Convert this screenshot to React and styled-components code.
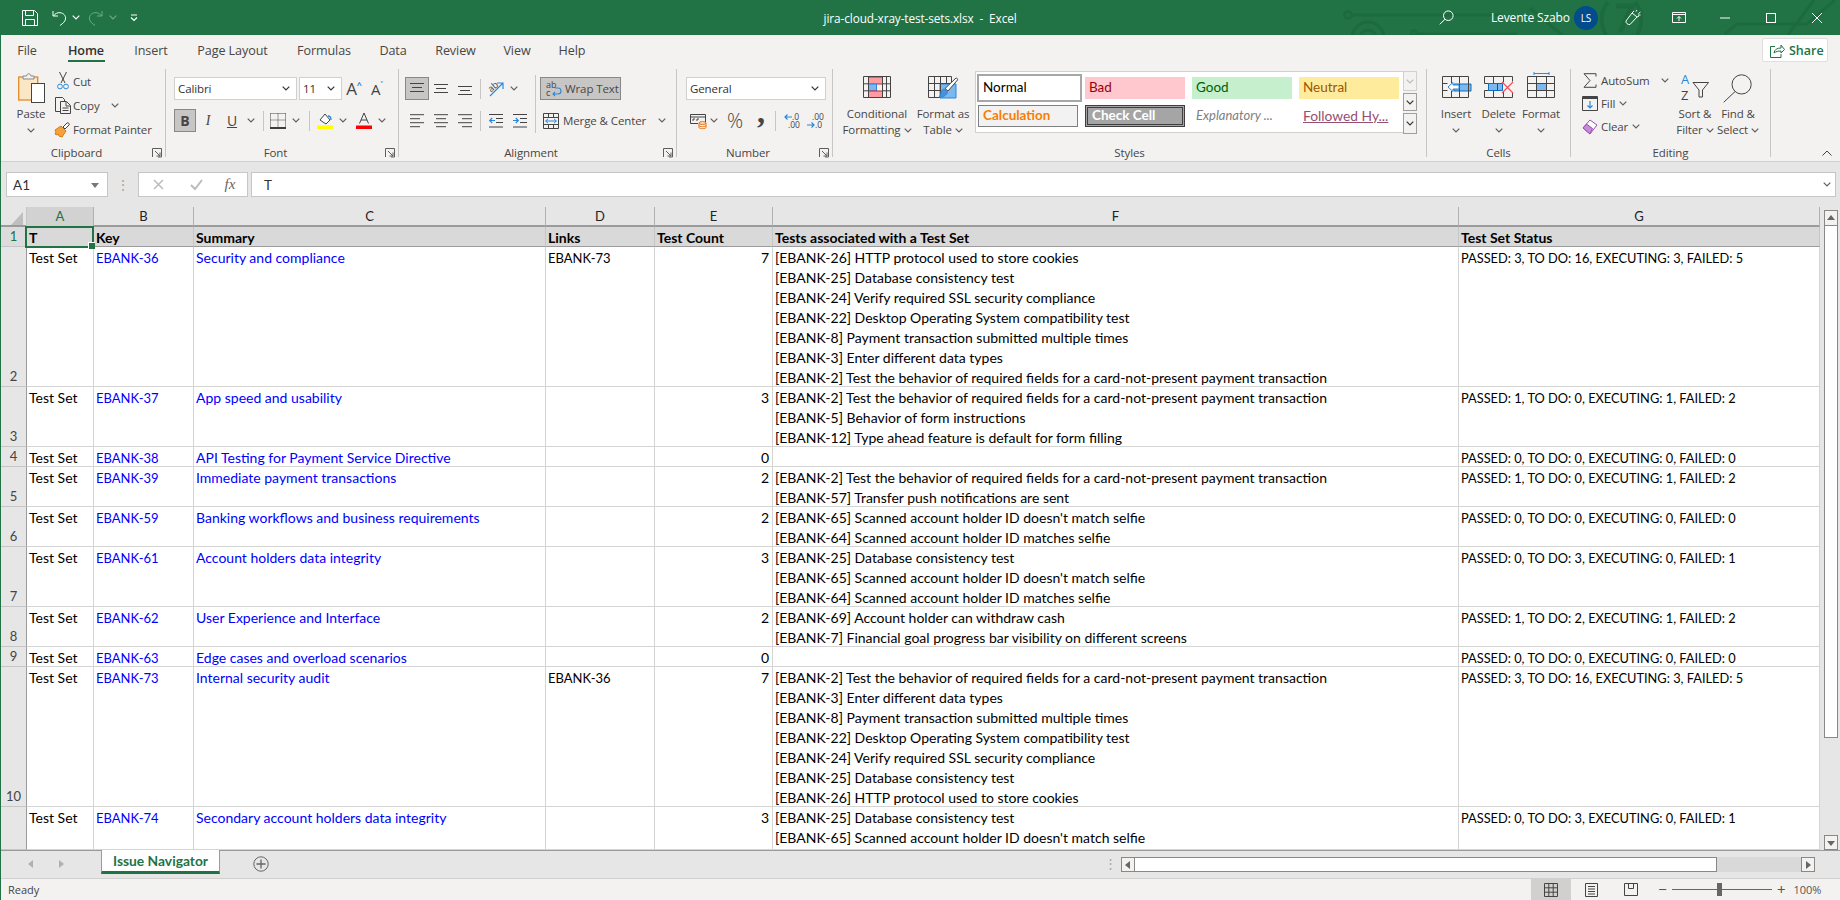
import React from "react";
import styled, { createGlobalStyle } from "styled-components";

const UI = `"Open Sans", "Noto Sans", sans-serif`;
const CELL = `Lato, "Noto Sans", sans-serif`;
const GREEN = "#217346";
const BLUE = "#2b88d8";
const DARK = "#444";

const GlobalStyle = createGlobalStyle`
  html, body { margin: 0; padding: 0; height: 100%; overflow: hidden; background: #f3f2f1; }
  * { box-sizing: border-box; }
`;

const Svg = ({ w, h, children, stroke = DARK }) => (
  <svg width={w} height={h} viewBox={`0 0 ${w} ${h}`} fill="none" stroke={stroke} strokeWidth="1" style={{ display: "block", flex: "none", overflow: "visible" }}>
    {children}
  </svg>
);

const Chevron = ({ color = "#605e5c" }) => (
  <Svg w={8} h={5} stroke={color}>
    <path d="M.7.7 4 4l3.3-3.3" strokeWidth="1.2" />
  </Svg>
);

const Launcher = () => (
  <Svg w={10} h={10} stroke="#605e5c">
    <path d="M.5 9V.5H9.5V9H6M3 3l5 5M8 4.500V8H4.500" />
  </Svg>
);

/* ---- title bar icons ---- */
const SaveIcon = () => (
  <Svg w={16} h={16} stroke="#fff">
    <path d="M.5.5h12l3 3v12H.5zM3.500.5v5h8v-5M3.500 15.500v-6h9v6" />
  </Svg>
);
const UndoIcon = ({ color = "#fff" }) => (
  <Svg w={15} h={16} stroke={color}>
    <path d="M1 1v5h5M1.500 6C3 3.500 5.500 2.500 8 2.700c3.500.300 6 3 5.500 6.300-.4 2.500-2.500 4.300-5.500 6.500" />
  </Svg>
);
const RedoIcon = ({ color }) => (
  <Svg w={15} h={16} stroke={color}>
    <path d="M14 1v5H9M13.500 6C12 3.500 9.500 2.500 7 2.700 3.500 3 1 5.700 1.500 9c.4 2.500 2.500 4.300 5.500 6.500" />
  </Svg>
);
const CustomizeIcon = () => (
  <Svg w={8} h={8} stroke="#fff">
    <path d="M1 1h6M1 3.500l3 3 3-3" strokeWidth="1.200" />
  </Svg>
);
const SearchIcon = ({ color = "#fff", size = 15 }) => (
  <Svg w={size} h={size} stroke={color}>
    <circle cx={size * 0.62} cy={size * 0.38} r={size * 0.32} />
    <path d={`M${size * 0.4} ${size * 0.62}L.7 ${size - 0.7}`} />
  </Svg>
);
const PenIcon = () => (
  <Svg w={17} h={17} stroke="#fff">
    <path d="M1 12l6-8 5 4-7 7.500c-2 .5-4.500-1.500-4-3.500zM7 4l2-2M12 8l2-1M11 2.500l1-1.500M13.500 4.500L15.500 3M13 6h2.500" />
  </Svg>
);
const DisplayIcon = () => (
  <Svg w={14} h={11} stroke="#fff">
    <path d="M.5.5h13v10H.5zM.5 2.500h13M7 9V4.500M5 6.500l2-2 2 2" />
  </Svg>
);
const MinIcon = () => <Svg w={10} h={10} stroke="#fff"><path d="M0 5h10" /></Svg>;
const MaxIcon = () => <Svg w={10} h={10} stroke="#fff"><rect x=".5" y=".5" width="9" height="9" /></Svg>;
const CloseIcon = () => <Svg w={10} h={10} stroke="#fff"><path d="M0 0l10 10M10 0L0 10" /></Svg>;

const CircuitArt = () => (
  <svg width="520" height="35" viewBox="0 0 520 35" fill="none" stroke="#1d6a3f" strokeWidth="3">
    <circle cx="28" cy="15" r="3.500" />
    <path d="M32 15h150" />
    <circle cx="48" cy="38" r="16" />
    <circle cx="48" cy="38" r="8" />
    <circle cx="94" cy="33" r="2.500" />
    <path d="M97 34h100M210 8l32 27" />
    <path d="M288 2c-8 9-8 22-2 33M315 2c8 9 8 22 2 33" strokeWidth="4" />
    <path d="M296 6h16l-12 26" strokeWidth="5" />
    <path d="M405 34l12-10h70l28-24M468 35l26-35" />
  </svg>
);

/* ---- ribbon icons ---- */
const PasteIcon = () => (
  <Svg w={27} h={31}>
    <rect x=".7" y="5" width="19" height="23" fill="#fbe6c6" stroke="#e38b24" strokeWidth="1.300" />
    <path d="M5 7V4h3.500c.5-3 4-3 4.500 0h3v3z" fill="#f3f2f1" stroke="#8a8886" />
    <rect x="13.500" y="11.500" width="13" height="19" fill="#fff" stroke={DARK} />
  </Svg>
);
const CutIcon = () => (
  <Svg w={12} h={18}>
    <path d="M2.500 0L8 11M9.500 0L4 11" />
    <circle cx="3" cy="14.500" r="2.400" stroke={BLUE} />
    <circle cx="9" cy="14.500" r="2.400" stroke={BLUE} />
  </Svg>
);
const CopyIcon = () => (
  <Svg w={16} h={17}>
    <path d="M5 14.500H.5V.5h7l2 2V5" />
    <path d="M5.500 4.500h6l4 4v8h-10zM11 5v4h4M7.500 11h6M7.500 13.500h6" />
  </Svg>
);
const PainterIcon = () => (
  <Svg w={17} h={17}>
    <path d="M1 9l6-4 5 5-4 6-3-1-1-2-1 1-2-1 1-2z" fill="#f6a23c" stroke="#e0760d" />
    <path d="M9 6l4-4c1-1 3 1 2 2l-4 4z" fill="#fff" stroke={DARK} />
  </Svg>
);
const AlignV = ({ at }) => (
  <Svg w={14} h={14}>
    <path d={`M0 ${at + 0.5}h14M2 ${at + 4.5}h10M0 ${at + 8.5}h14`} />
  </Svg>
);
const AlignH = ({ mode }) => {
  const short = mode === "left" ? "M0 4.500h10M0 12.500h10" : mode === "right" ? "M4 4.500h10M4 12.500h10" : "M2 4.500h10M2 12.500h10";
  return (
    <Svg w={14} h={14}>
      <path d={`M0 .5h14M0 8.500h14${short}`} transform="translate(0 .2)" />
    </Svg>
  );
};
const IndentIcon = ({ dir }) => (
  <Svg w={14} h={14}>
    <path d="M0 .5h14M7 4.500h7M7 8.500h7M0 13h14" />
    {dir === "out" ? (
      <path d="M6 6.500H.8M3.200 4L.7 6.500 3.200 9" stroke={BLUE} strokeWidth="1.200" />
    ) : (
      <path d="M0 6.500h5.200M2.800 4l2.500 2.500L2.800 9" stroke={BLUE} strokeWidth="1.200" />
    )}
  </Svg>
);
const OrientIcon = () => (
  <Svg w={17} h={16}>
    <text x="0" y="9" fontSize="9" fontFamily={UI} fill={DARK} stroke="none" transform="rotate(-40 5 6)">ab</text>
    <path d="M2 15L15 2M9 2h6v6" stroke={BLUE} strokeWidth="1.200" />
  </Svg>
);
const WrapIcon = () => (
  <Svg w={16} h={15}>
    <text x="0" y="7" fontSize="9" fontFamily={UI} fill={DARK} stroke="none">ab</text>
    <text x="0" y="15" fontSize="9" fontFamily={UI} fill={DARK} stroke="none">c</text>
    <path d="M7 13h5c4 0 4-6 0-6H9M9 11l-2 2 2 2" stroke={BLUE} strokeWidth="1.100" />
  </Svg>
);
const MergeIcon = () => (
  <Svg w={16} h={16}>
    <path d="M.5.5h15v15H.5zM.5 4.500h15M.5 11.500h15M5.500.5v4M10.500.5v4M5.500 11.500v4M10.500 11.500v4" />
    <path d="M2.500 8h11M5 5.800L2.700 8 5 10.200M11 5.800L13.300 8 11 10.200" stroke={BLUE} />
  </Svg>
);
const BorderIcon = () => (
  <Svg w={16} h={16}>
    <path d="M.5.5h15M.5.5v13M15.500.5v13M8 .5v13M.5 7h15" strokeDasharray="1 1" />
    <path d="M0 15h16" stroke="#000" strokeWidth="1.500" />
  </Svg>
);
const FillIcon = () => (
  <Svg w={16} h={17}>
    <path d="M3 8l5-6 5 6-4 4z" fill="#fff" />
    <path d="M11 4c2 0 3 2 3 4" stroke={BLUE} strokeWidth="1.300" />
    <rect x="0" y="13.500" width="16" height="3.500" fill="#ffff00" stroke="none" />
  </Svg>
);
const FontColorIcon = () => (
  <Svg w={16} h={17}>
    <path d="M3.500 11.500L8 1l4.500 10.500M5 8h6" />
    <rect x="0" y="13.500" width="16" height="3.500" fill="#ff0000" stroke="none" />
  </Svg>
);
const AccountIcon = () => (
  <Svg w={17} h={16}>
    <path d="M.5 1.500h15V10M.5 1.500v9H8M.5 4h15" />
    <path d="M3 8V6h2M7 8V6h2" />
    <ellipse cx="12.500" cy="10" rx="3.500" ry="1.500" fill="#fbd9a8" stroke="#e8791e" />
    <path d="M9 10v4.500c0 1.500 7 1.500 7 0V10M9 12.500c0 1.500 7 1.500 7 0" stroke="#e8791e" />
  </Svg>
);
const DecimalIcon = ({ more }) => (
  <Svg w={16} h={16}>
    {more ? (
      <>
        <text x="5" y="6.500" fontSize="8.500" fontFamily={UI} fill={DARK} stroke="none">.00</text>
        <text x="8" y="15" fontSize="8.500" fontFamily={UI} fill={DARK} stroke="none">.0</text>
        <path d="M0 12h7M4.500 9.500L7 12l-2.500 2.500" stroke={BLUE} strokeWidth="1.200" />
      </>
    ) : (
      <>
        <text x="8" y="6.500" fontSize="8.500" fontFamily={UI} fill={DARK} stroke="none">.0</text>
        <text x="4" y="15" fontSize="8.500" fontFamily={UI} fill={DARK} stroke="none">.00</text>
        <path d="M8 4H1M3.500 1.500L1 4l2.500 2.500" stroke={BLUE} strokeWidth="1.200" />
      </>
    )}
  </Svg>
);
const CondIcon = () => (
  <Svg w={28} h={22}>
    <path d="M5.500 1h14v7h-14z" fill="#ff9ca1" stroke="#d81e2b" />
    <path d="M5.500 8h8v7h-8z" fill="#7ab8ef" stroke={BLUE} />
    <path d="M5.500 15h14v6.500h-14z" fill="#ff9ca1" stroke="#d81e2b" />
    <path d="M.5.5h27v21H.5zM.5 7.800h5M.5 14.800h5M19.500 7.800h8M19.500 14.800h8M5.500.5v21M19.500.5v21M23.500.5v21" />
  </Svg>
);
const TableIcon = () => (
  <Svg w={30} h={24}>
    <path d="M12 8h16v14H12z" fill="#7ab8ef" stroke={BLUE} />
    <path d="M.5.5h23M.5 7.500h23M.5 14.500h12M.5 21.500h12M.5.5v21M6.500.5v21M12.500.5v21M18.500.5v7M23.500.5v7" />
    <path d="M28 2c1 0 2 1 1.500 2L20 15l-3-2.500z" fill="#fff" stroke={DARK} />
    <path d="M16.500 13l3 3c-.5 3-5 6-8.500 5 2-1.500 1.500-3 2-5 .5-2 2-3 3.500-3z" fill="#4a90d9" stroke={BLUE} />
  </Svg>
);
const InsertIcon = () => (
  <Svg w={32} h={22}>
    <path d="M14 8h17v7H14z" fill="#7ab8ef" stroke="#106ebe" />
    <path d="M2.500.5h26v21h-26zM2.500 7.500h5M2.500 14.500h5M11.500.5v7M19.500.5v7M11.500 15v6.500M19.500 15v6.500M19.500 8v7" />
    <path d="M13 6.500L8 11l5 4.500v-2.500h6V9h-6z" fill="#fff" stroke={BLUE} />
  </Svg>
);
const DeleteIcon = () => (
  <Svg w={30} h={22}>
    <path d="M4.500 7.500h14v7h-14z" fill="#7ab8ef" stroke="#106ebe" />
    <path d="M.5.500h28M.5 21.500h28M.5.500v7h4M.5 21.500v-7h4M9.500.500v7M19.500.500v6M9.500 14.500v7M19.500 16v5.500M28.500.500v5M28.500 17v4.500M13.500 7.500v7" />
    <path d="M18 6l11 11M29 6L18 17" stroke="#f0555f" strokeWidth="1.300" />
  </Svg>
);
const FormatIcon = () => (
  <Svg w={28} h={22}>
    <path d="M7 -2.500h15M7 -4v3M22 -4v3" stroke={BLUE} />
    <path d="M9.500 7.500h10v7h-10z" fill="#7ab8ef" stroke="#106ebe" />
    <path d="M.5.5h27v21H.5zM.5 7.500h27M.5 14.500h27M9.500.5v21M19.500.5v21" />
  </Svg>
);
const SumIcon = () => (
  <Svg w={14} h={15}>
    <path d="M13 3.500V.7H1l6 6.800-6 6.800h12v-2.800" />
  </Svg>
);
const FillDownIcon = () => (
  <Svg w={16} h={15}>
    <path d="M.5 14.500V.5h15v14z" />
    <path d="M.5 2h15" strokeWidth="2" />
    <path d="M8 5v7M5.500 9.500L8 12l2.500-2.500" stroke={BLUE} strokeWidth="1.200" />
  </Svg>
);
const ClearIcon = () => (
  <Svg w={16} h={16}>
    <path d="M1 9l7-8 7 5-7 9z" fill="#fff" stroke="#9b4fb5" />
    <path d="M1 9l3.500-4 6 4.500L8 15z" fill="#c58ad8" stroke="#9b4fb5" />
  </Svg>
);
const SortIcon = () => (
  <Svg w={28} h={28}>
    <text x="0" y="11" fontSize="13" fontFamily={UI} fill={BLUE} stroke="none">A</text>
    <text x="0" y="27" fontSize="13" fontFamily={UI} fill={DARK} stroke="none">Z</text>
    <path d="M12 9.500h15.500L21.500 17v7h-3.500v-7z" />
  </Svg>
);
const ShareIcon = () => (
  <Svg w={15} h={15} stroke={GREEN}>
    <path d="M5 3.500H.5v11h10.500V11M4 10c.5-3.500 3-5 7-5V2l3.500 4.500L11 10V8c-3 0-5 .5-7 2z" />
  </Svg>
);
const GridViewIcon = () => (
  <Svg w={14} h={14}>
    <path d="M.5.5h13v13H.5zM.5 4.800h13M.5 9.200h13M4.800.5v13M9.200.5v13" />
  </Svg>
);
const PageViewIcon = () => (
  <Svg w={13} h={14}>
    <path d="M.5.5h12v13H.5zM3 3.500h7M3 6h7M3 8.500h7M3 11h7" />
  </Svg>
);
const BreakViewIcon = () => (
  <Svg w={14} h={13}>
    <path d="M.5 12.500V.5h13v12zM4.500.5v5h5v-5" />
  </Svg>
);
const PlusCircle = () => (
  <Svg w={16} h={16} stroke="#666">
    <circle cx="8" cy="8" r="7.200" />
    <path d="M8 3.500v9M3.500 8h9" strokeWidth="1.300" />
  </Svg>
);
const ArrowTri = ({ dir, color = "#666", size = 7 }) => {
  const d = {
    up: "M0 6L4 1l4 5z",
    down: "M0 2l4 5 4-5z",
    left: "M6 0L1 4l5 4z",
    right: "M2 0l5 4-5 4z",
  }[dir];
  return (
    <svg width={size + 1} height={size + 1} viewBox="0 0 8 8" style={{ display: "block" }}>
      <path d={d} fill={color} />
    </svg>
  );
};

/* ---- window ---- */
const Win = styled.div`
  width: 1840px;
  height: 900px;
  display: flex;
  flex-direction: column;
  border-left: 1px solid ${GREEN};
  font-family: ${UI};
  color: ${DARK};
  overflow: hidden;
`;

const TitleBar = styled.header`
  position: relative;
  flex: none;
  height: 35px;
  margin-left: -1px;
  background: ${GREEN};
  display: flex;
  align-items: center;
  color: #fff;
`;

const TitleArt = styled.div`
  position: absolute;
  right: 0;
  top: 0;
  height: 35px;
  line-height: 0;
`;

const QuickTools = styled.div`
  position: relative;
  display: flex;
  align-items: center;
  width: 827px;
  padding-left: 22px;
`;

const QuickGap = styled.span`
  display: block;
  flex: none;
  width: ${(p) => p.$w}px;
`;

const TitleText = styled.div`
  position: relative;
  width: 618px;
  font-size: 11.800px;
  letter-spacing: -0.1px;
  white-space: pre;
`;

const TitleRight = styled.div`
  position: relative;
  display: flex;
  align-items: center;
  flex: 1;
`;

const UserName = styled.span`
  font-size: 12px;
  letter-spacing: -0.15px;
  margin-left: 37px;
  width: 83px;
  white-space: nowrap;
`;

const Avatar = styled.span`
  display: flex;
  align-items: center;
  justify-content: center;
  width: 24px;
  height: 24px;
  border-radius: 50%;
  background: #004c8c;
  font-size: 10px;
`;

const TitleBtn = styled.span`
  display: flex;
  justify-content: center;
  width: 46px;
`;

const TabRow = styled.nav`
  flex: none;
  height: 27px;
  display: flex;
  align-items: flex-start;
  background: #f3f2f1;
  padding-left: 1px;
`;

const TabItem = styled.div`
  width: ${(p) => p.$w}px;
  height: 27px;
  display: flex;
  justify-content: center;
  font-size: 12.600px;
  line-height: 18px;
  padding-top: 7px;
  color: ${(p) => (p.$active ? "#323130" : "#484644")};
  font-weight: ${(p) => (p.$active ? 600 : 400)};
  position: relative;
  letter-spacing: -0.1px;
  &::after {
    content: "";
    display: ${(p) => (p.$active ? "block" : "none")};
    position: absolute;
    left: 16px;
    right: 15px;
    bottom: 0;
    height: 2px;
    background: ${GREEN};
  }
`;

const ShareBtn = styled.button`
  margin: 3px 12px 0 auto;
  width: 66px;
  height: 24px;
  display: flex;
  align-items: center;
  gap: 4px;
  padding: 0 0 0 7px;
  background: #fff;
  border: 1px solid #e1dfdd;
  border-radius: 2px;
  color: ${GREEN};
  font-family: ${UI};
  font-size: 12.500px;
  font-weight: 600;
`;

const Ribbon = styled.section`
  flex: none;
  height: 100px;
  display: flex;
  background: #f3f2f1;
  border-bottom: 1px solid #d2d0ce;
  padding-top: 7px;
  position: relative;
  font-size: 11.500px;
  letter-spacing: -0.1px;
  color: #484644;
`;

const Group = styled.div`
  flex: none;
  width: ${(p) => p.$w}px;
  height: 88px;
  display: flex;
  flex-direction: column;
  border-right: 1px solid #c8c6c4;
`;

const GroupBody = styled.div`
  flex: 1;
  display: flex;
  padding-left: ${(p) => p.$pad || 0}px;
  min-height: 0;
`;

const GroupFoot = styled.div`
  flex: none;
  height: 14px;
  margin-bottom: -3px;
  display: flex;
  align-items: center;
  padding-right: ${(p) => (p.$plain ? 0 : 3)}px;
  line-height: 14px;
`;

const FootLabel = styled.span`
  flex: 1;
  text-align: center;
`;

const Collapse = styled.span`
  position: absolute;
  right: 8px;
  bottom: 5px;
`;

const SideColumn = styled.div`
  flex: none;
  width: ${(p) => (p.$w ? `${p.$w}px` : "auto")};
  display: flex;
  flex-direction: column;
`;

const BigBtn = styled.div`
  flex: none;
  width: ${(p) => p.$w}px;
  display: flex;
  flex-direction: column;
  align-items: center;
  padding-top: ${(p) => p.$top ?? 7}px;
  line-height: 16px;
  white-space: nowrap;
`;

const BigIconSlot = styled.span`
  display: flex;
  align-items: flex-start;
  justify-content: center;
  height: ${(p) => p.$h || 24}px;
  margin-bottom: ${(p) => p.$mb ?? 7}px;
`;

const BtnLine = styled.span`
  display: flex;
  align-items: center;
  justify-content: center;
  gap: 3px;
  height: ${(p) => p.$h || 16}px;
`;

const SmallRow = styled.div`
  display: flex;
  align-items: center;
  height: ${(p) => p.$h || 24}px;
  gap: ${(p) => p.$gap ?? 3}px;
  white-space: nowrap;
`;

const SmallSlot = styled.span`
  display: flex;
  justify-content: center;
  flex: none;
  width: ${(p) => p.$w}px;
`;

const ToolRow = styled.div`
  display: flex;
  align-items: center;
  height: 23px;
  margin-top: ${(p) => p.$mt || 0}px;
`;

const ToolBtn = styled.span`
  flex: none;
  display: flex;
  align-items: center;
  justify-content: center;
  width: ${(p) => p.$w || 24}px;
  height: 23px;
  font-family: ${(p) => (p.$serif ? `"Liberation Serif", serif` : "inherit")};
  font-size: 14px;
  font-style: ${(p) => (p.$italic ? "italic" : "normal")};
  font-weight: ${(p) => (p.$bold ? 700 : 400)};
  text-decoration: ${(p) => (p.$under ? "underline" : "none")};
  background: ${(p) => (p.$active ? "#c8c6c4" : "transparent")};
  border: ${(p) => (p.$active ? "1px solid #8a8886" : "none")};
`;

const PercentBtn = styled(ToolBtn)`
  font-size: 20px;
  font-weight: 300;
`;

const CommaBtn = styled(ToolBtn)`
  font-family: "Liberation Serif", serif;
  font-weight: 700;
  font-size: 32px;
  line-height: 23px;
  padding-bottom: 16px;
  overflow: visible;
`;

const ThinSep = styled.span`
  flex: none;
  display: block;
  width: 1px;
  height: 20px;
  background: #c8c6c4;
  margin: 0 ${(p) => p.$m ?? 4.5}px;
`;

const TallSep = styled.span`
  flex: none;
  display: block;
  width: 1px;
  height: 58px;
  margin: 6px 4px 0 3px;
  background: #c8c6c4;
`;

const ComboBox = styled.div`
  flex: none;
  width: ${(p) => p.$w}px;
  height: 23px;
  margin-right: ${(p) => p.$mr || 0}px;
  display: flex;
  align-items: center;
  justify-content: space-between;
  padding: 0 6px 0 3px;
  background: #fff;
  border: 1px solid #d2d0ce;
  font-size: 11.500px;
  color: #323130;
`;

const GrowFont = styled.span`
  display: flex;
  align-items: flex-start;
  justify-content: center;
  flex: none;
  width: ${(p) => p.$w}px;
  font-size: ${(p) => p.$size}px;
  line-height: 18px;
  color: #444;
  & sup {
    font-size: 9px;
    line-height: 9px;
    color: ${BLUE};
    font-weight: 700;
  }
`;

const WrapBtn = styled.div`
  width: 81px;
  height: 23px;
  display: flex;
  align-items: center;
  gap: 3px;
  padding-left: 5px;
  background: #c8c6c4;
  border: 1px solid #8a8886;
  white-space: nowrap;
`;

const MergeBtn = styled.div`
  display: flex;
  align-items: center;
  height: 23px;
  margin: 9px 0 0 3px;
  gap: 4px;
  white-space: nowrap;
`;

const BodyStack = styled.div`
  display: flex;
  flex-direction: column;
  padding-top: 8px;
`;

const Gallery = styled.div`
  flex: none;
  width: 428px;
  height: 62px;
  margin: 2px 0 0 3px;
  padding: 2px 0 0 2px;
  background: #fff;
  border: 1px solid #d2d0ce;
  border-right: none;
  display: grid;
  grid-template-columns: repeat(4, 100px);
  grid-template-rows: 28px 22px;
  column-gap: 7px;
  row-gap: 3px;
`;

const styleChip = {
  normal: "background:#fff;color:#000;border:2px solid #a6a6a6;margin:0 0 0 -1px;width:105px;",
  bad: "background:#ffc7ce;color:#9c0006;margin:3px 0 0;height:22px;",
  good: "background:#c6efce;color:#006100;margin:3px 0 0;height:22px;",
  neutral: "background:#ffeb9c;color:#9c5700;margin:3px 0 0;height:22px;",
  calc: "background:#f2f2f2;color:#fa7d00;border:1px solid #7f7f7f;font-weight:700;",
  check: "background:#a5a5a5;color:#fff;border:3px double #3f3f3f;font-weight:700;",
  expl: "color:#7f7f7f;font-style:italic;font-size:13px;",
  link: "color:#954f72;text-decoration:underline;font-size:13.800px;",
};

const StyleChip = styled.div`
  display: flex;
  align-items: center;
  padding: 0 0 2px 4px;
  font-family: ${CELL};
  font-size: 13.500px;
  letter-spacing: 0;
  white-space: nowrap;
  overflow: hidden;
  ${(p) => styleChip[p.$kind]}
`;

const GalleryScroll = styled.div`
  flex: none;
  width: 14px;
  margin-top: 2px;
  display: flex;
  flex-direction: column;
  gap: 2px;
`;

const GalleryBtn = styled.span`
  display: flex;
  align-items: center;
  justify-content: center;
  height: ${(p) => p.$h}px;
  background: #f3f2f1;
  border: 1px solid ${(p) => (p.$off ? "#d2d0ce" : "#a19f9d")};
`;

/* ---- formula bar ---- */
const FormulaBar = styled.div`
  flex: none;
  height: 45px;
  display: flex;
  padding: 10px 4px 10px 5px;
  background: #e6e6e6;
`;

const NameBox = styled.div`
  flex: none;
  width: 102px;
  height: 25px;
  display: flex;
  align-items: center;
  justify-content: space-between;
  padding: 0 8px 0 6px;
  background: #fff;
  border: 1px solid #c6c6c6;
  font-family: ${CELL};
  font-size: 13.500px;
  color: #333;
`;

const DotsSlot = styled.span`
  flex: none;
  width: 30px;
  display: flex;
  align-items: center;
  justify-content: center;
  color: #a6a6a6;
  font-size: 14px;
`;

const FxBox = styled.div`
  flex: none;
  width: 110px;
  height: 25px;
  display: flex;
  align-items: center;
  background: #fff;
  border: 1px solid #c6c6c6;
  margin-right: 3px;
`;

const FxSlot = styled.span`
  display: flex;
  justify-content: center;
  width: ${(p) => p.$w}px;
  font-family: "Liberation Serif", serif;
  font-style: italic;
  font-size: 15px;
  color: #666;
`;

const FormulaInput = styled.div`
  flex: 1;
  height: 25px;
  display: flex;
  align-items: center;
  justify-content: space-between;
  padding: 0 4px 0 12px;
  background: #fff;
  border: 1px solid #c6c6c6;
  font-family: ${CELL};
  font-size: 13.500px;
  color: #333;
`;

/* ---- sheet ---- */
const SheetArea = styled.div`
  flex: none;
  height: 643px;
  display: flex;
  background: #fff;
`;

const Sheet = styled.div`
  flex: none;
  width: 1819px;
  overflow: hidden;
  font-family: ${CELL};
  font-size: 14px;
  color: #000;
`;

const COLUMNS = "26px 67px 100px 352px 109px 118px 686px 361px";

const Row = styled.div`
  display: grid;
  grid-template-columns: ${COLUMNS};
  grid-template-rows: ${(p) => p.$height}px;
  height: ${(p) => p.$height}px;
`;

const ColHeadRow = styled.div`
  display: grid;
  grid-template-columns: ${COLUMNS};
  height: 20px;
  background: #e6e6e6;
  border-bottom: 2px solid #9b9b9b;
  font-size: 13px;
`;

const Corner = styled.div`
  position: relative;
  border-right: 1px solid #c6c6c6;
  &::after {
    content: "";
    position: absolute;
    right: 3px;
    bottom: 1px;
    width: 12px;
    height: 13px;
    background: #bfbfbf;
    clip-path: polygon(100% 0, 100% 100%, 0 100%);
  }
`;

const ColHead = styled.div`
  text-align: center;
  line-height: 19px;
  background: ${(p) => (p.$active ? "#d2d2d2" : "transparent")};
  color: ${(p) => (p.$active ? GREEN : "#222")};
  border-right: 1px solid #b1b1b1;
`;

const RowHead = styled.div`
  display: flex;
  align-items: flex-end;
  justify-content: center;
  padding-bottom: 1px;
  line-height: 18px;
  font-size: 13px;
  overflow: hidden;
  background: ${(p) => (p.$active ? "#dcdcdc" : "#e6e6e6")};
  color: ${(p) => (p.$active ? GREEN : "#444")};
  border-right: 1px solid #9b9b9b;
  border-bottom: 1px solid #c6c6c6;
`;

const Cell = styled.div`
  position: relative;
  z-index: ${(p) => (p.$selected ? 2 : 0)};
  padding: 1px 3px 0 2px;
  line-height: 20px;
  font-size: ${(p) => (p.$size ? `${p.$size}px` : "inherit")};
  text-align: ${(p) => (p.$right ? "right" : "left")};
  white-space: nowrap;
  overflow: ${(p) => (p.$header ? "visible" : "hidden")};
  font-weight: ${(p) => (p.$header ? 700 : 400)};
  color: ${(p) => (p.$link ? "#0000ff" : "#000")};
  background: ${(p) => (p.$header ? "#d9d9d9" : "#fff")};
  border-right: 1px solid ${(p) => (p.$header ? "#c6c6c6" : "#d4d4d4")};
  border-bottom: 1px solid ${(p) => (p.$header ? "#9b9b9b" : "#d4d4d4")};
`;

const SelectedMark = styled.span`
  position: absolute;
  left: -2px;
  top: -1px;
  right: -1px;
  bottom: -2px;
  border: 2px solid ${GREEN};
  &::after {
    content: "";
    position: absolute;
    right: -3px;
    bottom: -3px;
    width: 6px;
    height: 6px;
    background: ${GREEN};
    border: 1px solid #fff;
    border-width: 1px 0 0 1px;
  }
`;

const TestLine = styled.div`
  height: 20px;
  line-height: 20px;
`;

const VScroll = styled.div`
  flex: none;
  width: 20px;
  padding: 3px 2px 0 4px;
  background: #e6e6e6;
  display: flex;
  flex-direction: column;
`;

const ScrollBtn = styled.span`
  flex: none;
  display: flex;
  align-items: center;
  justify-content: center;
  width: ${(p) => p.$w || 14}px;
  height: ${(p) => p.$h || 15}px;
  background: #f3f2f1;
  border: 1px solid #8a8886;
`;

const VThumb = styled.span`
  display: block;
  flex: none;
  height: 512px;
  background: #fff;
  border: 1px solid #8a8886;
  border-top: none;
`;

const VTrack = styled.span`
  flex: 1;
  display: block;
`;

/* ---- sheet tabs + status ---- */
const TabStrip = styled.div`
  flex: none;
  height: 28px;
  display: flex;
  align-items: flex-start;
  background: #e6e6e6;
  border-top: 1px solid #9b9b9b;
`;

const TabNav = styled.span`
  flex: none;
  width: 100px;
  height: 26px;
  display: flex;
  align-items: center;
  gap: 22px;
  padding-left: 26px;
`;

const SheetTab = styled.div`
  flex: none;
  width: 119px;
  height: 24px;
  margin-top: -1px;
  display: flex;
  align-items: center;
  justify-content: center;
  background: #fff;
  border-left: 1px solid #9b9b9b;
  border-right: 1px solid #9b9b9b;
  border-bottom: 3px solid ${GREEN};
  font-family: ${CELL};
  font-size: 13.800px;
  font-weight: 700;
  color: ${GREEN};
`;

const AddSheet = styled.span`
  flex: none;
  margin: 5px 0 0 33px;
`;

const HDots = styled.span`
  flex: none;
  margin: 4px 0 0 835px;
  width: 14px;
  color: #a6a6a6;
  font-size: 13px;
  line-height: 16px;
`;

const HScroll = styled.div`
  flex: none;
  width: 694px;
  height: 15px;
  margin: 6px 0 0 3px;
  display: flex;
  background: #d9d9d9;
`;

const HThumb = styled.span`
  display: block;
  flex: none;
  width: 582px;
  height: 15px;
  background: #fff;
  border: 1px solid #8a8886;
  border-left: none;
`;

const HTrack = styled.span`
  display: block;
  flex: 1;
`;

const StatusBar = styled.footer`
  flex: none;
  height: 22px;
  display: flex;
  align-items: center;
  background: #f3f2f1;
  border-top: 1px solid #d2d0ce;
  font-size: 11px;
  color: #444;
  padding-left: 7px;
`;

const ViewBtn = styled.span`
  flex: none;
  display: flex;
  align-items: center;
  justify-content: center;
  width: 40px;
  height: 21px;
  margin-left: ${(p) => p.$ml || 0}px;
  background: ${(p) => (p.$active ? "#d2d0ce" : "transparent")};
`;

const ZoomBar = styled.span`
  display: flex;
  align-items: center;
  margin-left: 7px;
  gap: 5px;
  font-size: 15px;
  line-height: 15px;
  color: #555;
`;

const ZoomTrack = styled.span`
  position: relative;
  display: block;
  width: 100px;
  height: 1px;
  background: #666;
  &::after {
    content: "";
    position: absolute;
    left: 45px;
    top: -6px;
    width: 5px;
    height: 13px;
    background: #666;
  }
`;

const ZoomPct = styled.span`
  margin-left: 8px;
  font-size: 11px;
  color: #555;
`;

const tabs = [
  ["File", 50],
  ["Home", 68, true],
  ["Insert", 62],
  ["Page Layout", 101],
  ["Formulas", 82],
  ["Data", 56],
  ["Review", 69],
  ["View", 54],
  ["Help", 56],
];

const columns = ["A", "B", "C", "D", "E", "F", "G"];
const STATUS = (a, b, c, d) => `PASSED: ${a}, TO DO: ${b}, EXECUTING: ${c}, FAILED: ${d}`;

const T = {
  t26: "[EBANK-26] HTTP protocol used to store cookies",
  t25: "[EBANK-25] Database consistency test",
  t24: "[EBANK-24] Verify required SSL security compliance",
  t22: "[EBANK-22] Desktop Operating System compatibility test",
  t8: "[EBANK-8] Payment transaction submitted multiple times",
  t3: "[EBANK-3] Enter different data types",
  t2: "[EBANK-2] Test the behavior of required fields for a card-not-present payment transaction",
  t5: "[EBANK-5] Behavior of form instructions",
  t12: "[EBANK-12] Type ahead feature is default for form filling",
  t57: "[EBANK-57] Transfer push notifications are sent",
  t65: "[EBANK-65] Scanned account holder ID doesn't match selfie",
  t64: "[EBANK-64] Scanned account holder ID matches selfie",
  t69: "[EBANK-69] Account holder can withdraw cash",
  t7: "[EBANK-7] Financial goal progress bar visibility on different screens",
};

// the last row runs past the bottom of the sheet, so only the part in view is listed
const rows = [
  { n: 2, height: 140, key: "EBANK-36", summary: "Security and compliance", links: "EBANK-73", count: 7, tests: [T.t26, T.t25, T.t24, T.t22, T.t8, T.t3, T.t2], status: STATUS(3, 16, 3, 5) },
  { n: 3, height: 60, key: "EBANK-37", summary: "App speed and usability", count: 3, tests: [T.t2, T.t5, T.t12], status: STATUS(1, 0, 1, 2) },
  { n: 4, height: 20, key: "EBANK-38", summary: "API Testing for Payment Service Directive", count: 0, tests: [], status: STATUS(0, 0, 0, 0) },
  { n: 5, height: 40, key: "EBANK-39", summary: "Immediate payment transactions", count: 2, tests: [T.t2, T.t57], status: STATUS(1, 0, 1, 2) },
  { n: 6, height: 40, key: "EBANK-59", summary: "Banking workflows and business requirements", count: 2, tests: [T.t65, T.t64], status: STATUS(0, 0, 0, 0) },
  { n: 7, height: 60, key: "EBANK-61", summary: "Account holders data integrity", count: 3, tests: [T.t25, T.t65, T.t64], status: STATUS(0, 3, 0, 1) },
  { n: 8, height: 40, key: "EBANK-62", summary: "User Experience and Interface", count: 2, tests: [T.t69, T.t7], status: STATUS(1, 2, 1, 2) },
  { n: 9, height: 20, key: "EBANK-63", summary: "Edge cases and overload scenarios", count: 0, tests: [], status: STATUS(0, 0, 0, 0) },
  { n: 10, height: 140, key: "EBANK-73", summary: "Internal security audit", links: "EBANK-36", count: 7, tests: [T.t2, T.t3, T.t8, T.t22, T.t24, T.t25, T.t26], status: STATUS(3, 16, 3, 5) },
  { n: "", height: 43, key: "EBANK-74", summary: "Secondary account holders data integrity", count: 3, tests: [T.t25, T.t65], status: STATUS(0, 3, 0, 1) },
];

const ClipboardGroup = () => (
  <Group $w={165}>
    <GroupBody $pad={6}>
      <BigBtn $w={48} $top={3}>
        <BigIconSlot $h={31} $mb={2}><PasteIcon /></BigIconSlot>
        <BtnLine $h={18}>Paste</BtnLine>
        <BtnLine $h={14}><Chevron /></BtnLine>
      </BigBtn>
      <SideColumn>
        <SmallRow>
          <SmallSlot $w={15}><CutIcon /></SmallSlot>
          Cut
        </SmallRow>
        <SmallRow>
          <SmallSlot $w={15}><CopyIcon /></SmallSlot>
          Copy
          <SmallSlot $w={24}><Chevron /></SmallSlot>
        </SmallRow>
        <SmallRow>
          <SmallSlot $w={15}><PainterIcon /></SmallSlot>
          Format Painter
        </SmallRow>
      </SideColumn>
    </GroupBody>
    <GroupFoot>
      <FootLabel>Clipboard</FootLabel>
      <Launcher />
    </GroupFoot>
  </Group>
);

const FontGroup = () => (
  <Group $w={233}>
    <GroupBody $pad={8}>
      <BodyStack>
        <ToolRow>
          <ComboBox $w={123} $mr={2}>Calibri<Chevron color="#333" /></ComboBox>
          <ComboBox $w={43}>11<Chevron color="#333" /></ComboBox>
          <GrowFont $w={24} $size={17}>A<sup>^</sup></GrowFont>
          <GrowFont $w={22} $size={15}>A<sup>˅</sup></GrowFont>
        </ToolRow>
        <ToolRow $mt={9}>
          <ToolBtn $w={22} $active $bold>B</ToolBtn>
          <ToolBtn $w={24} $italic $serif>I</ToolBtn>
          <ToolBtn $w={24} $under>U</ToolBtn>
          <ToolBtn $w={14}><Chevron /></ToolBtn>
          <ThinSep />
          <ToolBtn $w={20}><BorderIcon /></ToolBtn>
          <ToolBtn $w={16}><Chevron /></ToolBtn>
          <ThinSep />
          <ToolBtn $w={22}><FillIcon /></ToolBtn>
          <ToolBtn $w={14}><Chevron /></ToolBtn>
          <ToolBtn $w={28}><FontColorIcon /></ToolBtn>
          <ToolBtn $w={8}><Chevron /></ToolBtn>
        </ToolRow>
      </BodyStack>
    </GroupBody>
    <GroupFoot>
      <FootLabel>Font</FootLabel>
      <Launcher />
    </GroupFoot>
  </Group>
);

const AlignmentGroup = () => (
  <Group $w={278}>
    <GroupBody $pad={6}>
      <BodyStack>
        <ToolRow>
          <ToolBtn $active><AlignV at={1} /></ToolBtn>
          <ToolBtn><AlignV at={2} /></ToolBtn>
          <ToolBtn><AlignV at={4} /></ToolBtn>
          <ThinSep $m={3} />
          <ToolBtn $w={24}><OrientIcon /></ToolBtn>
          <ToolBtn $w={12}><Chevron /></ToolBtn>
        </ToolRow>
        <ToolRow $mt={9}>
          <ToolBtn><AlignH mode="left" /></ToolBtn>
          <ToolBtn><AlignH mode="center" /></ToolBtn>
          <ToolBtn><AlignH mode="right" /></ToolBtn>
          <ThinSep $m={3} />
          <ToolBtn><IndentIcon dir="out" /></ToolBtn>
          <ToolBtn><IndentIcon dir="in" /></ToolBtn>
        </ToolRow>
      </BodyStack>
      <TallSep />
      <BodyStack>
        <WrapBtn><WrapIcon />Wrap Text</WrapBtn>
        <MergeBtn>
          <MergeIcon />
          Merge &amp; Center
          <SmallSlot $w={24}><Chevron /></SmallSlot>
        </MergeBtn>
      </BodyStack>
    </GroupBody>
    <GroupFoot>
      <FootLabel>Alignment</FootLabel>
      <Launcher />
    </GroupFoot>
  </Group>
);

const NumberGroup = () => (
  <Group $w={156}>
    <GroupBody $pad={9}>
      <BodyStack>
        <ComboBox $w={140}>General<Chevron color="#333" /></ComboBox>
        <ToolRow $mt={9}>
          <ToolBtn $w={24}><AccountIcon /></ToolBtn>
          <ToolBtn $w={8}><Chevron /></ToolBtn>
          <PercentBtn $w={34}>%</PercentBtn>
          <CommaBtn $w={18}>,</CommaBtn>
          <ThinSep $m={5} />
          <ToolBtn $w={22}><DecimalIcon /></ToolBtn>
          <ToolBtn $w={24}><DecimalIcon more /></ToolBtn>
        </ToolRow>
      </BodyStack>
    </GroupBody>
    <GroupFoot>
      <FootLabel>Number</FootLabel>
      <Launcher />
    </GroupFoot>
  </Group>
);

const StylesGroup = () => (
  <Group $w={594}>
    <GroupBody $pad={7}>
      <BigBtn $w={74}>
        <BigIconSlot $h={23}><CondIcon /></BigIconSlot>
        <BtnLine>Conditional</BtnLine>
        <BtnLine>Formatting<Chevron /></BtnLine>
      </BigBtn>
      <BigBtn $w={58}>
        <BigIconSlot $h={23}><TableIcon /></BigIconSlot>
        <BtnLine>Format as</BtnLine>
        <BtnLine>Table<Chevron /></BtnLine>
      </BigBtn>
      <Gallery>
        <StyleChip $kind="normal">Normal</StyleChip>
        <StyleChip $kind="bad">Bad</StyleChip>
        <StyleChip $kind="good">Good</StyleChip>
        <StyleChip $kind="neutral">Neutral</StyleChip>
        <StyleChip $kind="calc">Calculation</StyleChip>
        <StyleChip $kind="check">Check Cell</StyleChip>
        <StyleChip $kind="expl">Explanatory ...</StyleChip>
        <StyleChip $kind="link">Followed Hy...</StyleChip>
      </Gallery>
      <GalleryScroll>
        <GalleryBtn $h={20} $off><Chevron color="#bbb" /></GalleryBtn>
        <GalleryBtn $h={18}><Chevron color="#333" /></GalleryBtn>
        <GalleryBtn $h={21}><Chevron color="#333" /></GalleryBtn>
      </GalleryScroll>
    </GroupBody>
    <GroupFoot $plain>
      <FootLabel>Styles</FootLabel>
    </GroupFoot>
  </Group>
);

const CellsGroup = () => (
  <Group $w={144}>
    <GroupBody $pad={8}>
      <BigBtn $w={42}>
        <BigIconSlot $h={23}><InsertIcon /></BigIconSlot>
        <BtnLine>Insert</BtnLine>
        <BtnLine><Chevron /></BtnLine>
      </BigBtn>
      <BigBtn $w={43}>
        <BigIconSlot $h={23}><DeleteIcon /></BigIconSlot>
        <BtnLine>Delete</BtnLine>
        <BtnLine><Chevron /></BtnLine>
      </BigBtn>
      <BigBtn $w={42}>
        <BigIconSlot $h={23}><FormatIcon /></BigIconSlot>
        <BtnLine>Format</BtnLine>
        <BtnLine><Chevron /></BtnLine>
      </BigBtn>
    </GroupBody>
    <GroupFoot $plain>
      <FootLabel>Cells</FootLabel>
    </GroupFoot>
  </Group>
);

const EditingGroup = () => (
  <Group $w={200}>
    <GroupBody $pad={11}>
      <SideColumn $w={92}>
        <SmallRow $h={23} $gap={4}>
          <SmallSlot $w={15}><SumIcon /></SmallSlot>
          AutoSum
          <SmallSlot $w={22}><Chevron /></SmallSlot>
        </SmallRow>
        <SmallRow $h={23} $gap={4}>
          <SmallSlot $w={15}><FillDownIcon /></SmallSlot>
          Fill
          <Chevron />
        </SmallRow>
        <SmallRow $h={23} $gap={4}>
          <SmallSlot $w={15}><ClearIcon /></SmallSlot>
          Clear
          <Chevron />
        </SmallRow>
      </SideColumn>
      <BigBtn $w={42} $top={4}>
        <BigIconSlot $h={28} $mb={5}><SortIcon /></BigIconSlot>
        <BtnLine>Sort &amp;</BtnLine>
        <BtnLine>Filter<Chevron /></BtnLine>
      </BigBtn>
      <BigBtn $w={44} $top={4}>
        <BigIconSlot $h={28} $mb={5}><SearchIcon color={DARK} size={30} /></BigIconSlot>
        <BtnLine>Find &amp;</BtnLine>
        <BtnLine>Select<Chevron /></BtnLine>
      </BigBtn>
    </GroupBody>
    <GroupFoot $plain>
      <FootLabel>Editing</FootLabel>
    </GroupFoot>
  </Group>
);

export default function App() {
  return (
    <>
      <GlobalStyle />
      <Win>
        <TitleBar>
          <TitleArt><CircuitArt /></TitleArt>
          <QuickTools>
            <SaveIcon />
            <QuickGap $w={14} />
            <UndoIcon />
            <QuickGap $w={5} />
            <Chevron color="#fff" />
            <QuickGap $w={8} />
            <RedoIcon color="#6fa88a" />
            <QuickGap $w={6} />
            <Chevron color="#6fa88a" />
            <QuickGap $w={13} />
            <CustomizeIcon />
          </QuickTools>
          <TitleText>{"jira-cloud-xray-test-sets.xlsx  -  Excel"}</TitleText>
          <TitleRight>
            <SearchIcon />
            <UserName>Levente Szabo</UserName>
            <Avatar>LS</Avatar>
            <QuickGap $w={12} />
            <TitleBtn><PenIcon /></TitleBtn>
            <TitleBtn><DisplayIcon /></TitleBtn>
            <TitleBtn><MinIcon /></TitleBtn>
            <TitleBtn><MaxIcon /></TitleBtn>
            <TitleBtn><CloseIcon /></TitleBtn>
          </TitleRight>
        </TitleBar>

        <TabRow>
          {tabs.map(([name, w, active]) => (
            <TabItem key={name} $w={w} $active={active}>{name}</TabItem>
          ))}
          <ShareBtn><ShareIcon />Share</ShareBtn>
        </TabRow>

        <Ribbon>
          <ClipboardGroup />
          <FontGroup />
          <AlignmentGroup />
          <NumberGroup />
          <StylesGroup />
          <CellsGroup />
          <EditingGroup />
          <Collapse><Svg w={10} h={6}><path d="M.5 5.500L5 1l4.500 4.500" /></Svg></Collapse>
        </Ribbon>

        <FormulaBar>
          <NameBox>A1<ArrowTri dir="down" color="#777" /></NameBox>
          <DotsSlot>⋮</DotsSlot>
          <FxBox>
            <FxSlot $w={38}><Svg w={11} h={11} stroke="#bbb"><path d="M1 1l9 9M10 1l-9 9" strokeWidth="1.500" /></Svg></FxSlot>
            <FxSlot $w={38}><Svg w={13} h={11} stroke="#bbb"><path d="M1 6l4 4 7-9" strokeWidth="2" /></Svg></FxSlot>
            <FxSlot $w={30}>fx</FxSlot>
          </FxBox>
          <FormulaInput>T<Chevron /></FormulaInput>
        </FormulaBar>

        <SheetArea>
          <Sheet>
            <ColHeadRow>
              <Corner />
              {columns.map((c, i) => (
                <ColHead key={c} $active={i === 0}>{c}</ColHead>
              ))}
            </ColHeadRow>
            <Row $height={20}>
              <RowHead $active>1</RowHead>
              <Cell $header $selected>T<SelectedMark /></Cell>
              <Cell $header>Key</Cell>
              <Cell $header>Summary</Cell>
              <Cell $header>Links</Cell>
              <Cell $header>Test Count</Cell>
              <Cell $header>Tests associated with a Test Set</Cell>
              <Cell $header>Test Set Status</Cell>
            </Row>
            {rows.map((r) => (
              <Row key={r.key} $height={r.height}>
                <RowHead>{r.n}</RowHead>
                <Cell>Test Set</Cell>
                <Cell $link $size={13}>{r.key}</Cell>
                <Cell $link>{r.summary}</Cell>
                <Cell $size={13}>{r.links}</Cell>
                <Cell $right>{r.count}</Cell>
                <Cell>{r.tests.map((t) => <TestLine key={t}>{t}</TestLine>)}</Cell>
                <Cell $size={12.8}>{r.status}</Cell>
              </Row>
            ))}
          </Sheet>
          <VScroll>
            <ScrollBtn $h={16}><ArrowTri dir="up" /></ScrollBtn>
            <VThumb />
            <VTrack />
            <ScrollBtn><ArrowTri dir="down" /></ScrollBtn>
          </VScroll>
        </SheetArea>

        <TabStrip>
          <TabNav>
            <ArrowTri dir="left" color="#b0b0b0" />
            <ArrowTri dir="right" color="#b0b0b0" />
          </TabNav>
          <SheetTab>Issue Navigator</SheetTab>
          <AddSheet><PlusCircle /></AddSheet>
          <HDots>⋮</HDots>
          <HScroll>
            <ScrollBtn><ArrowTri dir="left" /></ScrollBtn>
            <HThumb />
            <HTrack />
            <ScrollBtn><ArrowTri dir="right" /></ScrollBtn>
          </HScroll>
        </TabStrip>

        <StatusBar>
          Ready
          <ViewBtn $active $ml={1492}><GridViewIcon /></ViewBtn>
          <ViewBtn><PageViewIcon /></ViewBtn>
          <ViewBtn><BreakViewIcon /></ViewBtn>
          <ZoomBar>−<ZoomTrack />+</ZoomBar>
          <ZoomPct>100%</ZoomPct>
        </StatusBar>
      </Win>
    </>
  );
}
